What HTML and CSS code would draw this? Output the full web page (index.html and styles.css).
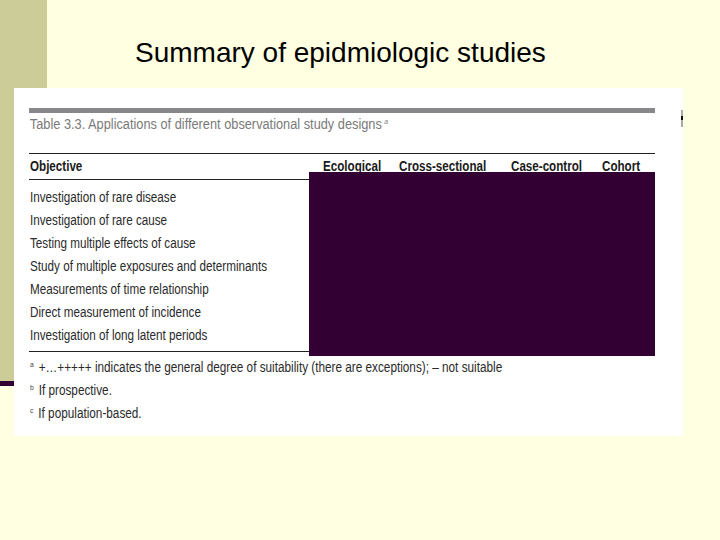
FILE: index.html
```html
<!DOCTYPE html>
<html>
<head>
<meta charset="utf-8">
<link rel="stylesheet" href="styles.css">
</head>
<body>
<div class="slide">
  <div class="side">
    <div class="side-bar"></div>
    <div class="side-line"></div>
  </div>
  <div class="main">
    <h1 class="title">Summary of epidmiologic studies</h1>
  </div>

  <div class="picture">
    <div class="sheet">
      <div class="top-bar"></div>
      <div class="caption">Table 3.3. Applications of different observational study designs<sup class="sup">a</sup></div>
      <div class="rule"></div>
      <div class="head">
        <span>Objective</span>
        <span>Ecological</span>
        <span>Cross-sectional</span>
        <span>Case-control</span>
        <span>Cohort</span>
      </div>
      <div class="rule"></div>
      <ul class="rows">
        <li>Investigation of rare disease</li>
        <li>Investigation of rare cause</li>
        <li>Testing multiple effects of cause</li>
        <li>Study of multiple exposures and determinants</li>
        <li>Measurements of time relationship</li>
        <li>Direct measurement of incidence</li>
        <li>Investigation of long latent periods</li>
      </ul>
      <div class="rule"></div>
      <ul class="notes">
        <li><sup class="sup">a</sup> +…+++++ indicates the general degree of suitability (there are exceptions); – not suitable</li>
        <li><sup class="sup">b</sup> If prospective.</li>
        <li><sup class="sup">c</sup> If population-based.</li>
      </ul>
    </div>
    <div class="mask"></div>
  </div>
  <div class="edge-mark"></div>
</div>
</body>
</html>
```

FILE: styles.css
```css
html, body {
  margin: 0;
  padding: 0;
}
body {
  background: #ffffe1;
  font-family: "Liberation Sans", Arial, sans-serif;
}
.slide {
  position: relative;
  width: 720px;
  height: 540px;
  display: flex;
  overflow: hidden;
}
.side {
  width: 47px;
  display: flex;
  flex-direction: column;
}
.side-bar {
  height: 381px;
  background: #cccc99;
}
.side-line {
  height: 5px;
  background: #330033;
}
.main {
  flex: 1;
  padding-left: 88px;
}
.title {
  margin: 0;
  padding-top: 33px;
  font-weight: normal;
  font-size: 28px;
  line-height: 40px;
  color: #000;
}
.picture {
  position: absolute;
  left: 14px;
  top: 88px;
  width: 669px;
  height: 348px;
  background: #fff;
}
.sheet {
  margin-left: 15px;
  width: 626px;
  padding-top: 20px;
  font-family: "Liberation Sans", Arial, sans-serif;
  font-size: 14px;
  color: #2a2a2a;
}
.top-bar {
  height: 5px;
  background: #88888b;
}
.caption {
  margin-top: 3px;
  line-height: 16px;
  height: 37px;
  font-size: 15.4px;
  color: #7a7a7a;
  padding-left: 1px;
  white-space: nowrap;
  transform: scaleX(0.83);
  transform-origin: 0 50%;
}
.sup {
  font-size: 8px;
  font-style: italic;
  vertical-align: 5px;
  margin-left: 3px;
  line-height: 0;
}
.rule {
  height: 1px;
  background: #222;
}
.head {
  display: grid;
  grid-template-columns: 293px 76px 112px 91px 1fr;
  height: 25px;
  padding-top: 4px;
  box-sizing: border-box;
  line-height: 16px;
  font-weight: bold;
  padding-left: 1px;
  color: #1a1a1a;
}
.head span {
  white-space: nowrap;
  transform: scaleX(0.83);
  transform-origin: 0 50%;
}
.rows, .notes {
  list-style: none;
  margin: 0;
  padding: 6px 0 4px 1px;
}
.rows li, .notes li {
  line-height: 23px;
  height: 23px;
  white-space: nowrap;
  transform: scaleX(0.835);
  transform-origin: 0 50%;
}
.notes {
  padding-top: 4px;
}
.notes li {
  transform: scaleX(0.84);
}
.notes .sup {
  margin-left: 0;
  margin-right: 2px;
  font-style: normal;
  color: #444;
}
.mask {
  position: absolute;
  left: 295px;
  top: 84px;
  width: 346px;
  height: 184px;
  background: #330033;
}
.edge-mark {
  position: absolute;
  left: 681px;
  top: 110px;
  width: 2px;
  height: 17px;
  background: linear-gradient(#aaa 0 35%, #111 35% 60%, #aaa 60%);
}
```
